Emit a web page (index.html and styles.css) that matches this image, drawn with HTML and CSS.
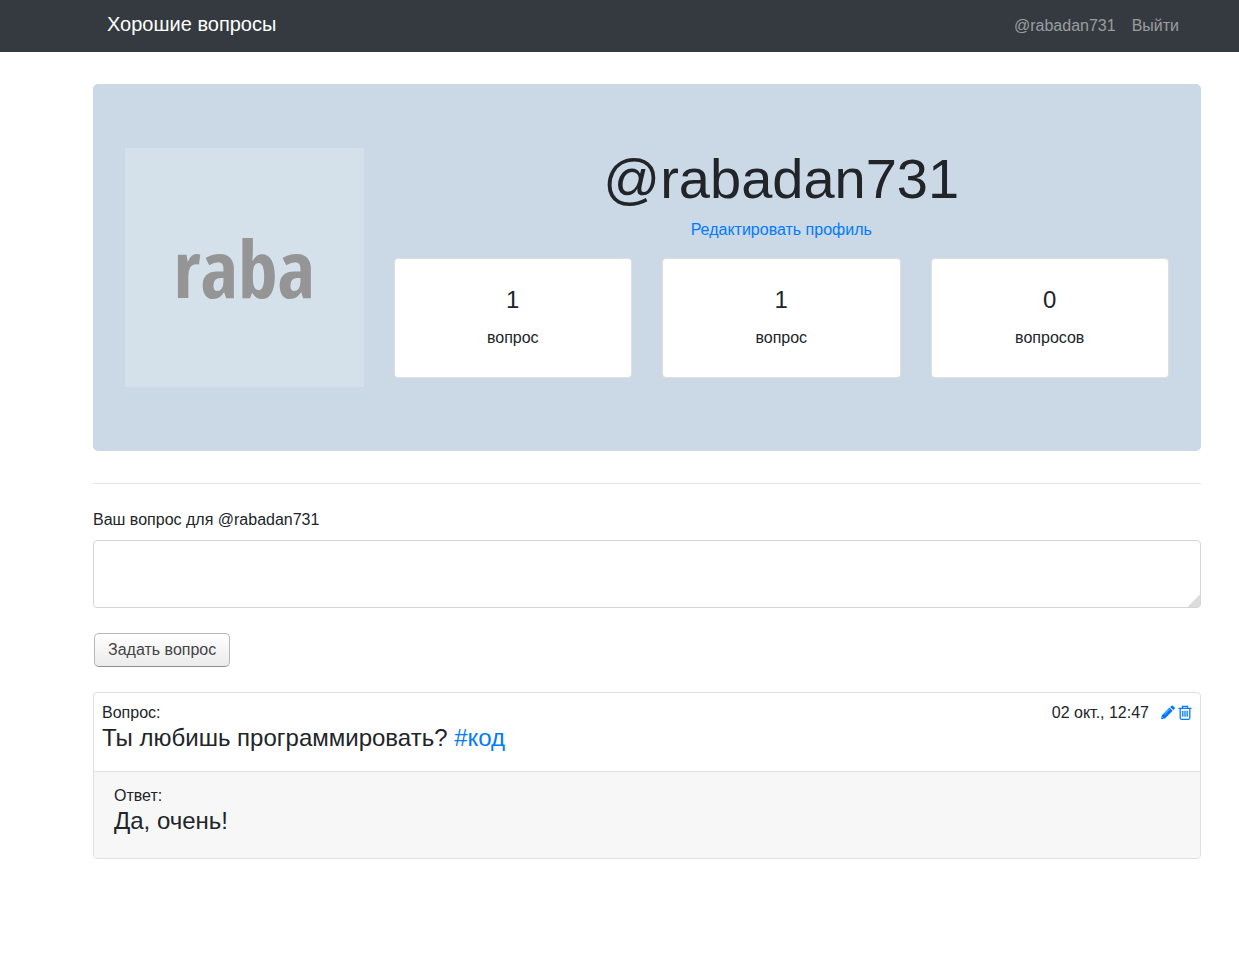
FILE: index.html
```html
<!DOCTYPE html>
<html lang="ru">
<head>
<meta charset="utf-8">
<meta name="viewport" content="width=device-width, initial-scale=1">
<title>Хорошие вопросы</title>
<link rel="stylesheet" href="styles.css">
</head>
<body>
<header class="navbar">
  <a class="brand" href="#">Хорошие вопросы</a>
  <nav class="nav">
    <a href="#">@rabadan731</a>
    <a href="#">Выйти</a>
  </nav>
</header>
<main class="container">
  <section class="profile">
    <div class="avatar">raba</div>
    <div class="info">
      <h1>@rabadan731</h1>
      <a class="edit" href="#">Редактировать профиль</a>
      <div class="stats">
        <div class="stat"><strong>1</strong><span>вопрос</span></div>
        <div class="stat"><strong>1</strong><span>вопрос</span></div>
        <div class="stat"><strong>0</strong><span>вопросов</span></div>
      </div>
    </div>
  </section>
  <hr>
  <form class="ask">
    <label for="question">Ваш вопрос для @rabadan731</label>
    <textarea id="question" rows="2"></textarea>
    <button type="button">Задать вопрос</button>
  </form>
  <article class="card">
    <div class="question">
      <div class="meta">
        <span>Вопрос:</span>
        <div class="tools">
          <time>02 окт., 12:47</time>
          <div class="actions">
            <a href="#" aria-label="Редактировать"><svg width="15" height="15" viewBox="0 0 15 15"><path fill="currentColor" d="M10.200 1.900 11.200.900a1.300 1.300 0 0 1 1.900 0L14.400 2.200a1.300 1.300 0 0 1 0 1.900l-1 1zM9.500 2.600 12.700 5.800 5 13.500 1 14.300 1.800 10.300z"/><path fill="none" stroke="#fff" stroke-width=".6" d="M4.300 9.300 9.300 4.300M2 12.200 3.200 13.400"/></svg></a>
            <a href="#" aria-label="Удалить"><svg width="14" height="15" viewBox="0 0 14 15"><path fill="none" stroke="currentColor" stroke-width="1.300" d="M.5 3.300h13M4.500 3V1.300h5V3M2.200 3.500v9.300q0 1.500 1.500 1.500h6.600q1.500 0 1.500-1.500V3.500M4.800 5.800v6M7 5.800v6M9.200 5.800v6"/></svg></a>
          </div>
        </div>
      </div>
      <h2>Ты любишь программировать? <a href="#">#код</a></h2>
    </div>
    <div class="answer">
      <span>Ответ:</span>
      <h2>Да, очень!</h2>
    </div>
  </article>
</main>
</body>
</html>
```
FILE: styles.css
```css
* { box-sizing: border-box; }
body {
  margin: 0;
  font: 16px/24px "Liberation Sans", Arial, sans-serif;
  color: #212529;
  background: #fff;
}
a { color: #007bff; text-decoration: none; }
h1, h2 { margin: 0; font-weight: 400; }
.navbar {
  display: flex;
  justify-content: space-between;
  align-items: baseline;
  padding: 8px 60px 12px 107px;
  background: #343a40;
}
.brand { color: #fff; font-size: 20px; line-height: 32px; }
.nav { display: flex; gap: 16px; }
.nav a { color: rgba(255, 255, 255, .5); }
.container { padding: 32px 38px 32px 93px; }
.profile {
  display: grid;
  grid-template-columns: repeat(4, minmax(0, 1fr));
  gap: 30px;
  padding: 64px 32px;
  border-radius: 5px;
  background: #cbd8e5;
}
.avatar {
  display: flex;
  align-items: center;
  justify-content: center;
  aspect-ratio: 1;
  background: #d4e1ea;
  color: #959595;
  font: bold 80px/96px "Open Sans Condensed", "Liberation Sans Narrow", "DejaVu Sans Condensed", sans-serif;
}
.info {
  grid-column: span 3;
  display: flex;
  flex-direction: column;
  align-items: center;
}
h1 { font-size: 56px; line-height: 62px; margin-bottom: 8px; }
.edit { margin-bottom: 16px; }
.stats {
  align-self: stretch;
  display: grid;
  grid-template-columns: repeat(3, minmax(0, 1fr));
  gap: 30px;
}
.stat {
  display: flex;
  flex-direction: column;
  align-items: center;
  gap: 13px;
  padding: 28px 20px 27px;
  border: 1px solid #dfdfdf;
  border-radius: 4px;
  background: #fff;
}
.stat strong { font-size: 24px; line-height: 26px; font-weight: 400; }
hr { margin: 32px 0 24px; border: 0; border-top: 1px solid #e5e5e5; }
.ask {
  display: flex;
  flex-direction: column;
  align-items: flex-start;
}
.ask label { margin-bottom: 8px; }
.ask textarea {
  width: 100%;
  height: 68px;
  padding: 8px 12px;
  border: 1px solid #d5d5d5;
  border-radius: 4px;
  font: inherit;
  resize: vertical;
}
.ask textarea::-webkit-resizer {
  background: linear-gradient(135deg, transparent 60%, #dcdcdc 60%);
}
.ask button {
  margin: 25px 1px;
  padding: 4px 13px;
  border: 1px solid #b7b7b7;
  border-bottom-color: #8f8f8f;
  border-radius: 5px;
  background: linear-gradient(#fff, #ebebeb);
  color: #444;
  font: inherit;
}
.card {
  border: 1px solid #dfdfdf;
  border-radius: 4px;
  overflow: hidden;
}
.card h2 { font-size: 24px; line-height: 26px; margin-bottom: 12px; }
.question { padding: 8px; }
.meta { display: flex; justify-content: space-between; }
.tools { display: flex; gap: 11px; }
.actions { display: flex; align-items: center; gap: 3px; }
.actions svg { display: block; }
.answer {
  padding: 12px 20px;
  border-top: 1px solid #dfdfdf;
  background: #f7f7f7;
}
```
